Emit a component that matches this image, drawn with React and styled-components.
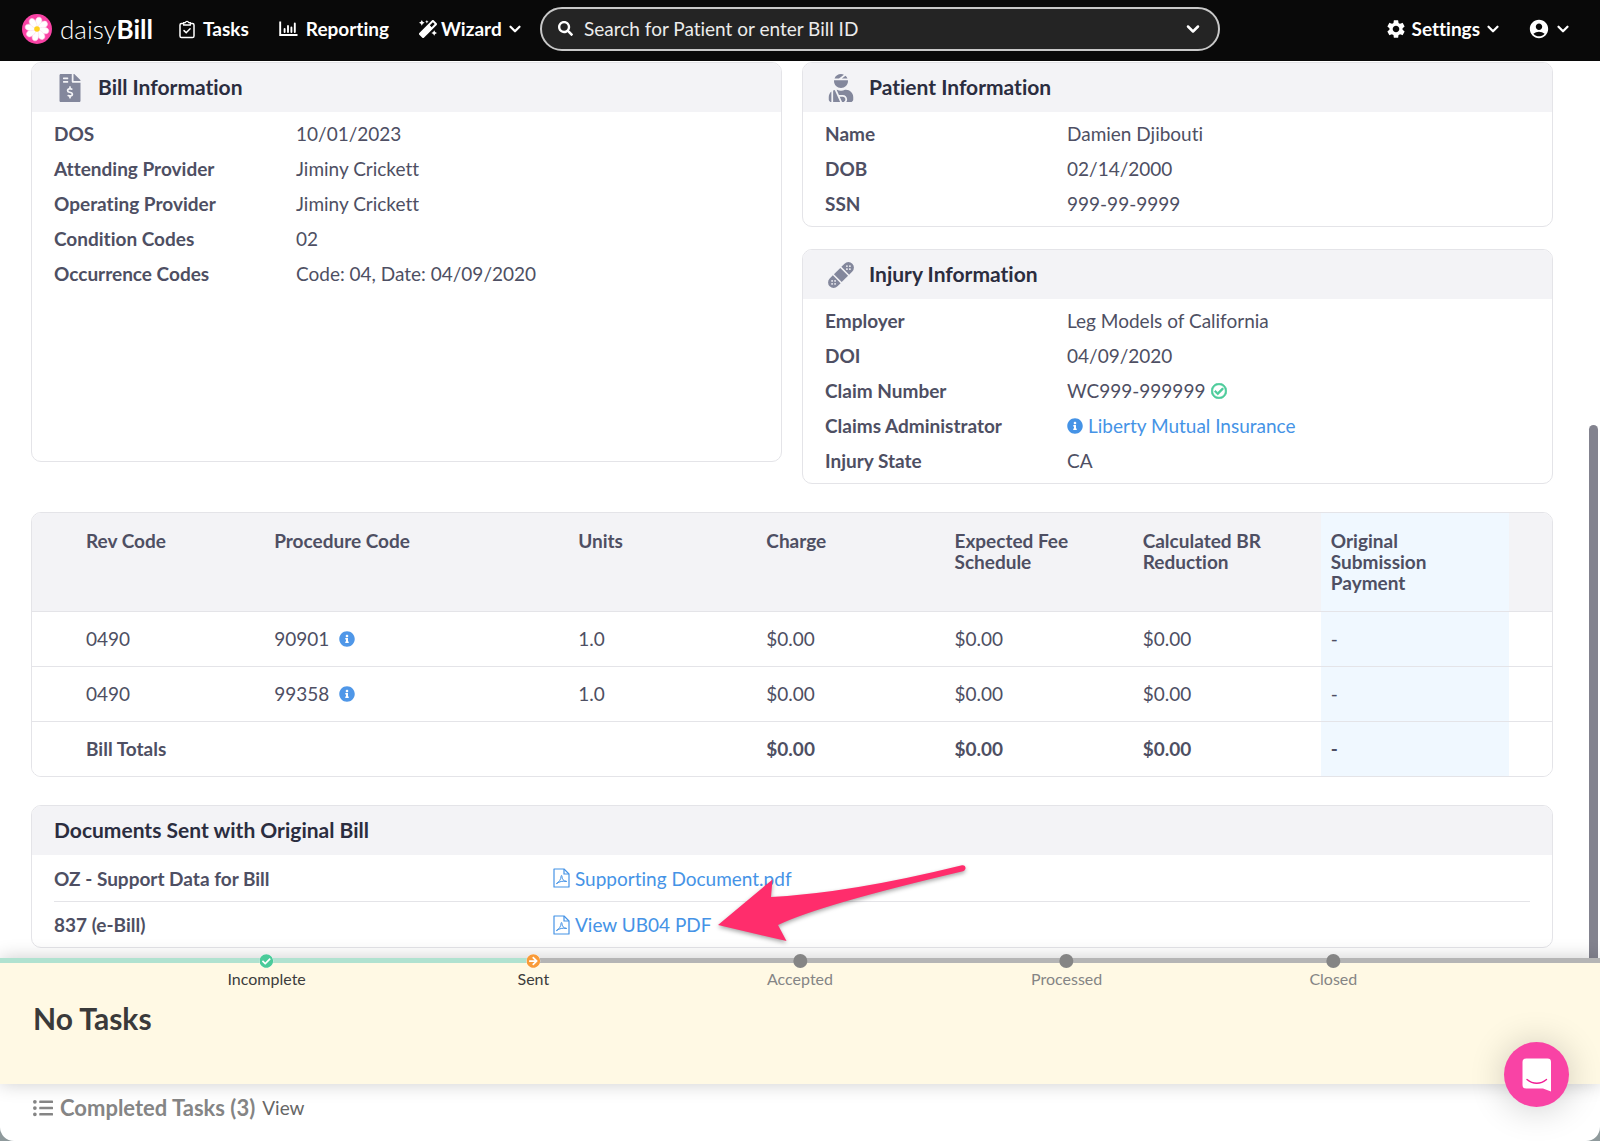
import React from 'react'
import styled, { createGlobalStyle } from 'styled-components'
import {
    FaArrowCircleRight,
    FaCheckCircle,
    FaFileInvoiceDollar,
    FaInfoCircle,
    FaListUl,
    FaMagic,
    FaRegCheckCircle,
    FaSearch,
    FaUserInjured,
} from 'react-icons/fa'
import { MdAccountCircle, MdSettings } from 'react-icons/md'
import { FiChevronDown } from 'react-icons/fi'

const billRows = [
    { label: 'DOS', value: '10/01/2023' },
    { label: 'Attending Provider', value: 'Jiminy Crickett' },
    { label: 'Operating Provider', value: 'Jiminy Crickett' },
    { label: 'Condition Codes', value: '02' },
    { label: 'Occurrence Codes', value: 'Code: 04, Date: 04/09/2020' },
]

const patientRows = [
    { label: 'Name', value: 'Damien Djibouti' },
    { label: 'DOB', value: '02/14/2000' },
    { label: 'SSN', value: '999-99-9999' },
]

const injuryRows = [
    { label: 'Employer', value: 'Leg Models of California' },
    { label: 'DOI', value: '04/09/2020' },
    { label: 'Claim Number', value: 'WC999-999999', verified: true },
    { label: 'Claims Administrator', value: 'Liberty Mutual Insurance', link: true },
    { label: 'Injury State', value: 'CA' },
]

const lines = [
    { rev: '0490', code: '90901', units: '1.0' },
    { rev: '0490', code: '99358', units: '1.0' },
]

const steps = [
    { name: 'Incomplete', state: 'done' },
    { name: 'Sent', state: 'current' },
    { name: 'Accepted' },
    { name: 'Processed' },
    { name: 'Closed' },
]

const DaisyIcon = () => (
    <svg width="30" height="30" viewBox="0 0 30 30" aria-hidden="true">
        <circle cx="15" cy="15" r="15" fill="#f943a5" />
        {[0, 45, 90, 135, 180, 225, 270, 315].map((deg) => (
            <path
                key={deg}
                d="M15 15 C10.8 10 10.8 3 15 3 C19.2 3 19.2 10 15 15Z"
                fill="#fff"
                stroke="#fbd3e8"
                strokeWidth="0.5"
                transform={`rotate(${deg + 12} 15 15)`}
            />
        ))}
        <circle cx="15" cy="15" r="2.8" fill="#ffd21f" />
    </svg>
)

const TasksIcon = () => (
    <svg width="16" height="20" viewBox="0 0 16 20" fill="none" stroke="#fff" strokeWidth="1.5" aria-hidden="true">
        <path d="M4.500 4.400H2.600A1.600 1.600 0 0 0 1 6v11a1.600 1.600 0 0 0 1.600 1.600h10.800A1.600 1.600 0 0 0 15 17V6a1.600 1.600 0 0 0-1.600-1.600h-1.900" />
        <path d="M4.700 6V3.600h1.600a1.800 1.800 0 0 1 3.400 0h1.600V6z" strokeWidth="1.300" />
        <path d="M5 11.600l2.200 2.200 3.900-4" strokeLinecap="round" />
    </svg>
)

const ReportIcon = () => (
    <svg width="19" height="16" viewBox="0 0 19 16" fill="none" stroke="#fff" strokeWidth="1.900" aria-hidden="true">
        <path d="M1.200 0.500V14H18.500" />
        <path d="M5.600 8v3M9 5V11M12.400 6.500V11M15.800 2.500V11" strokeLinecap="round" />
    </svg>
)

const BandageIcon = () => (
    <svg width="30" height="30" viewBox="0 0 30 30" aria-hidden="true">
        <g transform="rotate(-45 15 15)">
            <path d="M9 9.500H4.500a5.500 5.500 0 0 0 0 11H9zM21 9.500h4.500a5.500 5.500 0 0 1 0 11H21z" fill="#83879c" />
            <rect x="10.500" y="9.500" width="9" height="11" fill="#83879c" />
            <g fill="#f3f3f6">
                <circle cx="4.500" cy="12.900" r="0.900" />
                <circle cx="4.500" cy="17.100" r="0.900" />
                <circle cx="2.400" cy="15" r="0.900" />
                <circle cx="6.600" cy="15" r="0.900" />
                <circle cx="25.500" cy="12.900" r="0.900" />
                <circle cx="25.500" cy="17.100" r="0.900" />
                <circle cx="23.400" cy="15" r="0.900" />
                <circle cx="27.600" cy="15" r="0.900" />
            </g>
        </g>
    </svg>
)

const PdfIcon = () => (
    <svg width="17" height="20" viewBox="0 0 17 20" fill="none" stroke="currentColor" strokeWidth="1.200" aria-hidden="true">
        <path d="M1 1h10l5 5v13H1z" strokeLinejoin="round" />
        <path d="M11 1v5h5" />
        <path d="M3.500 15.500c2.500-1.200 4.700-4.500 4.600-7.300 0-1 1-.9.900.1-.2 2.500 1.300 4.900 4.300 5.100M4 15.400c2.500-2 5.500-2.600 9.300-2" strokeWidth="1" strokeLinecap="round" />
    </svg>
)

const ChatIcon = () => (
    <svg width="30" height="34" viewBox="0 0 30 34" aria-hidden="true">
        <path d="M4 0.500h21.500a3.500 3.500 0 0 1 3.500 3.500v29.500l-8-3H4a3.500 3.500 0 0 1-3.500-3.500V4A3.500 3.500 0 0 1 4 .5z" fill="#fff" />
        <path d="M5 21.500c6 5 13.500 5 19.500 0" fill="none" stroke="#f01f95" strokeWidth="1.400" strokeLinecap="round" />
    </svg>
)

const InfoCard = ({ icon, title, rows, short }) => (
    <Card $short={short}>
        <CardHead>
            <HeadIcon>{icon}</HeadIcon>
            <CardTitle>{title}</CardTitle>
        </CardHead>
        <InfoList>
            {rows.map((row) => (
                <InfoRow key={row.label}>
                    <Label>{row.label}</Label>
                    <Value>
                        {row.link ? (
                            <TextLink href="#administrator">
                                <FaInfoCircle size={16} />
                                {row.value}
                            </TextLink>
                        ) : (
                            row.value
                        )}
                        {row.verified && (
                            <FaRegCheckCircle size={16} color="#4bcb9a" stroke="#4bcb9a" strokeWidth={24} />
                        )}
                    </Value>
                </InfoRow>
            ))}
        </InfoList>
    </Card>
)

const App = () => {
    return (
        <Screen>
            <GlobalStyle />
            <TopBar>
                <Brand href="#home">
                    <DaisyIcon />
                    <BrandName>daisy<b>Bill</b></BrandName>
                </Brand>
                <Nav>
                    <NavLink href="#tasks"><TasksIcon />Tasks</NavLink>
                    <NavLink href="#reporting"><ReportIcon />Reporting</NavLink>
                    <NavButton type="button">
                        <FaMagic size={18} />Wizard<FiChevronDown size={18} strokeWidth={3} />
                    </NavButton>
                </Nav>
                <SearchBox>
                    <FaSearch size={15} />
                    <SearchInput type="text" aria-label="Search" placeholder="Search for Patient or enter Bill ID" />
                    <IconButton type="button" aria-label="Search options">
                        <FiChevronDown size={20} strokeWidth={3} />
                    </IconButton>
                </SearchBox>
                <UserArea>
                    <NavButton type="button">
                        <MdSettings size={22} />Settings<FiChevronDown size={18} strokeWidth={3} />
                    </NavButton>
                    <NavButton type="button" aria-label="Account">
                        <MdAccountCircle size={22} /><FiChevronDown size={18} strokeWidth={3} />
                    </NavButton>
                </UserArea>
            </TopBar>

            <Body>
                <Content>
                    <Columns>
                        <InfoCard short icon={<FaFileInvoiceDollar size={28} />} title="Bill Information" rows={billRows} />
                        <Stack>
                            <InfoCard icon={<FaUserInjured size={28} />} title="Patient Information" rows={patientRows} />
                            <InfoCard icon={<BandageIcon />} title="Injury Information" rows={injuryRows} />
                        </Stack>
                    </Columns>

                    <Card>
                        <Table>
                            <colgroup>
                                <SpaceCol />
                                <DataCol />
                                <col />
                                <DataCol />
                                <DataCol />
                                <DataCol />
                                <DataCol />
                                <DataCol />
                                <SpaceCol />
                            </colgroup>
                            <thead>
                                <tr>
                                    <Th />
                                    <Th>Rev Code</Th>
                                    <Th>Procedure Code</Th>
                                    <Th>Units</Th>
                                    <Th>Charge</Th>
                                    <Th>Expected Fee Schedule</Th>
                                    <Th>Calculated BR Reduction</Th>
                                    <Th $blue>Original Submission Payment</Th>
                                    <Th />
                                </tr>
                            </thead>
                            <tbody>
                                {lines.map((line) => (
                                    <tr key={line.code}>
                                        <Td />
                                        <Td>{line.rev}</Td>
                                        <Td>
                                            <CodeCell>{line.code}<FaInfoCircle size={16} color="#4f97e8" /></CodeCell>
                                        </Td>
                                        <Td>{line.units}</Td>
                                        <Td>$0.00</Td>
                                        <Td>$0.00</Td>
                                        <Td>$0.00</Td>
                                        <Td $blue>-</Td>
                                        <Td />
                                    </tr>
                                ))}
                                <tr>
                                    <Td />
                                    <Td $bold>Bill Totals</Td>
                                    <Td />
                                    <Td />
                                    <Td $bold>$0.00</Td>
                                    <Td $bold>$0.00</Td>
                                    <Td $bold>$0.00</Td>
                                    <Td $bold $blue>-</Td>
                                    <Td />
                                </tr>
                            </tbody>
                        </Table>
                    </Card>

                    <Card>
                        <CardHead>
                            <CardTitle>Documents Sent with Original Bill</CardTitle>
                        </CardHead>
                        <DocList>
                            <DocRow>
                                <Label>OZ - Support Data for Bill</Label>
                                <DocCell>
                                    <TextLink href="#supporting"><PdfIcon />Supporting Document.pdf</TextLink>
                                </DocCell>
                            </DocRow>
                            <DocRow>
                                <Label>837 (e-Bill)</Label>
                                <DocCell>
                                    <TextLink href="#ub04"><PdfIcon />View UB04 PDF</TextLink>
                                    <Arrow viewBox="0 0 256 84" aria-hidden="true">
                                        <path
                                            d="M4 63 L58.500 17.500 L57 35 Q136 31 248 3.300 C252 2.500 253 8 249 9.200 Q105 43 64 63 L72.500 79z"
                                            fill="#ff2d6c"
                                        />
                                    </Arrow>
                                </DocCell>
                            </DocRow>
                        </DocList>
                    </Card>
                </Content>
                <ScrollTrack>
                    <ScrollThumb />
                </ScrollTrack>
            </Body>

            <TaskPanel>
                <Steps>
                    {steps.map((step) => (
                        <Step key={step.name} $state={step.state}>
                            <Dot $state={step.state}>
                                {step.state === 'done' && <FaCheckCircle size={14} color="#4bcb9a" />}
                                {step.state === 'current' && <FaArrowCircleRight size={14} color="#f99b39" />}
                            </Dot>
                            {step.name}
                        </Step>
                    ))}
                </Steps>
                <NoTasks>No Tasks</NoTasks>
            </TaskPanel>

            <Completed>
                <FaListUl size={20} />
                <CompletedTitle>Completed Tasks (3)</CompletedTitle>
                <ViewLink href="#completed">View</ViewLink>
            </Completed>

            <ChatButton type="button" aria-label="Open chat">
                <ChatIcon />
            </ChatButton>
        </Screen>
    )
}

const GlobalStyle = createGlobalStyle`
    * {
        box-sizing: border-box;
    }
    body {
        margin: 0;
        background: #8f9a9c;
        color: #4e4f63;
        font-family: Lato, "Liberation Sans", sans-serif;
        font-size: 19px;
        font-variant-ligatures: none;
    }
    button, input {
        font: inherit;
    }
    svg {
        flex-shrink: 0;
    }
`
const Screen = styled.div`
    display: flex;
    flex-direction: column;
    height: 100vh;
    overflow: hidden;
    background: #fff;
    border-radius: 0 0 14px 14px;
`
const TopBar = styled.header`
    display: flex;
    align-items: center;
    flex-shrink: 0;
    height: 61px;
    padding: 0 28px 4px 22px;
    background: #090909;
    color: #fff;
`
const Brand = styled.a`
    display: flex;
    align-items: center;
    gap: 8px;
    width: 157px;
    color: #fff;
    text-decoration: none;
`
const BrandName = styled.span`
    font-size: 26px;
    font-weight: 300;
    line-height: 30px;
    b {
        font-weight: 700;
    }
`
const Nav = styled.nav`
    display: flex;
    align-items: center;
    gap: 30px;
    width: 361px;
`
const NavLink = styled.a`
    display: flex;
    align-items: center;
    gap: 8px;
    color: #fff;
    font-weight: 700;
    line-height: 22px;
    text-decoration: none;
`
const NavButton = styled.button`
    display: flex;
    align-items: center;
    gap: 4px;
    padding: 0;
    border: 0;
    background: none;
    color: #fff;
    font-weight: 700;
    line-height: 22px;
`
const SearchBox = styled.div`
    display: flex;
    align-items: center;
    gap: 11px;
    flex: 0 1 680px;
    height: 44px;
    padding: 0 15px 0 16px;
    border: 2px solid #c8c8c8;
    border-radius: 22px;
    background: #242424;
`
const SearchInput = styled.input`
    flex: 1;
    min-width: 0;
    padding: 0 0 1px;
    border: 0;
    outline: 0;
    background: none;
    color: #fff;
    &::placeholder {
        color: #ececec;
        opacity: 1;
    }
`
const IconButton = styled.button`
    display: flex;
    padding: 0;
    border: 0;
    background: none;
    color: #fff;
`
const UserArea = styled.div`
    display: flex;
    align-items: center;
    gap: 26px;
    margin-left: auto;
`
const Body = styled.main`
    display: flex;
    flex: 1;
    min-height: 0;
`
const Content = styled.div`
    display: flex;
    flex-direction: column;
    flex: 1;
    gap: 28px;
    min-width: 0;
    padding: 1px 36px 0 31px;
`
const Columns = styled.div`
    display: grid;
    grid-template-columns: 1fr 1fr;
    gap: 20px;
`
const Stack = styled.div`
    display: flex;
    flex-direction: column;
    gap: 22px;
`
const Card = styled.section`
    overflow: hidden;
    margin-bottom: ${({ $short }) => ($short ? '22px' : '0')};
    border: 1px solid #e4e4e8;
    border-radius: 10px;
    background: #fff;
`
const CardHead = styled.div`
    display: flex;
    align-items: center;
    height: 49px;
    padding: 0 22px;
    background: #f3f3f6;
`
const HeadIcon = styled.span`
    display: flex;
    justify-content: center;
    width: 32px;
    margin-right: 12px;
    color: #83879c;
`
const CardTitle = styled.h2`
    margin: 0;
    padding-bottom: 3px;
    color: #2b2d3f;
    font-size: 21px;
    font-weight: 700;
`
const InfoList = styled.dl`
    margin: 0;
    padding: 4px 22px 5px;
`
const InfoRow = styled.div`
    display: flex;
    line-height: 35px;
`
const Label = styled.dt`
    width: 242px;
    font-weight: 700;
`
const Value = styled.dd`
    display: flex;
    align-items: center;
    gap: 6px;
    margin: 0;
`
const TextLink = styled.a`
    display: flex;
    align-items: center;
    gap: 5px;
    color: #4593e6;
    text-decoration: none;
`
const Table = styled.table`
    width: 100%;
    border-collapse: collapse;
    table-layout: fixed;
`
const SpaceCol = styled.col`
    width: 44px;
    &:last-child {
        width: 43px;
    }
`
const DataCol = styled.col`
    width: 12.38%;
`
const Th = styled.th`
    height: 98px;
    padding: 17px 24px 0 10px;
    background: ${({ $blue }) => ($blue ? '#f0f8ff' : '#f3f3f6')};
    font-weight: 700;
    line-height: 21px;
    text-align: left;
    vertical-align: top;
`
const Td = styled.td`
    height: 55px;
    padding: 0 10px;
    border-top: 1px solid #e4e4e8;
    background: ${({ $blue }) => ($blue ? '#f0f8ff' : '#fff')};
    font-weight: ${({ $bold }) => ($bold ? 700 : 400)};
`
const CodeCell = styled.span`
    display: flex;
    align-items: center;
    gap: 10px;
`
const DocList = styled.dl`
    margin: 0;
    padding: 0 22px;
`
const DocRow = styled.div`
    display: flex;
    align-items: center;
    height: 46px;
    & + & {
        border-top: 1px solid #e4e4e8;
    }
    ${Label} {
        width: 499px;
    }
`
const DocCell = styled.dd`
    position: relative;
    margin: 0;
`
const Arrow = styled.svg`
    position: absolute;
    top: -51px;
    left: 161px;
    width: 256px;
    height: 84px;
    filter: drop-shadow(0 2px 2px rgba(0, 0, 0, 0.35));
`
const ScrollTrack = styled.div`
    display: flex;
    align-items: flex-end;
    width: 11px;
`
const ScrollThumb = styled.div`
    width: 9px;
    height: 59.4%;
    border-radius: 5px 5px 0 0;
    background: #83838f;
`
const TaskPanel = styled.section`
    position: relative;
    flex-shrink: 0;
    height: 126px;
    background: #fff9e4;
    box-shadow: 0 0 18px rgba(0, 0, 0, 0.2);
`
const Steps = styled.ol`
    display: grid;
    grid-template-columns: repeat(6, 1fr);
    height: 44px;
    margin: 0;
    padding: 0;
    border-top: 5px solid #b5b5b5;
    border-image: linear-gradient(90deg, #b0e2d0 33.33%, #b5b5b5 33.33%) 5;
    list-style: none;
`
// each label is centred on the line between two columns
const Step = styled.li`
    display: flex;
    flex-direction: column;
    align-items: center;
    gap: 1px;
    width: 100%;
    margin-top: -9px;
    transform: translateX(50%);
    color: ${({ $state }) => ($state ? '#3c3c3c' : '#858585')};
    font-size: 16px;
    line-height: 20px;
`
const Dot = styled.span`
    display: flex;
    width: 14px;
    height: 14px;
    border-radius: 50%;
    background: ${({ $state }) => ($state ? '#fff' : '#858585')};
`
const NoTasks = styled.h1`
    margin: 0;
    padding: 0 33px;
    color: #3a3a3a;
    font-size: 30px;
    font-weight: 700;
    line-height: 32px;
`
const Completed = styled.footer`
    display: flex;
    align-items: center;
    flex-shrink: 0;
    height: 57px;
    padding: 0 33px 10px;
    color: #858585;
`
const CompletedTitle = styled.h2`
    margin: 0 7px;
    font-size: 22px;
    font-weight: 700;
`
const ViewLink = styled.a`
    color: #666;
    text-decoration: none;
`
const ChatButton = styled.button`
    position: absolute;
    right: 31px;
    bottom: 34px;
    display: flex;
    align-items: center;
    justify-content: center;
    width: 65px;
    height: 65px;
    padding: 0;
    border: 0;
    border-radius: 50%;
    background: #f943a5;
    box-shadow: 0 2px 36px rgba(0, 0, 0, 0.2);
`

export default App
